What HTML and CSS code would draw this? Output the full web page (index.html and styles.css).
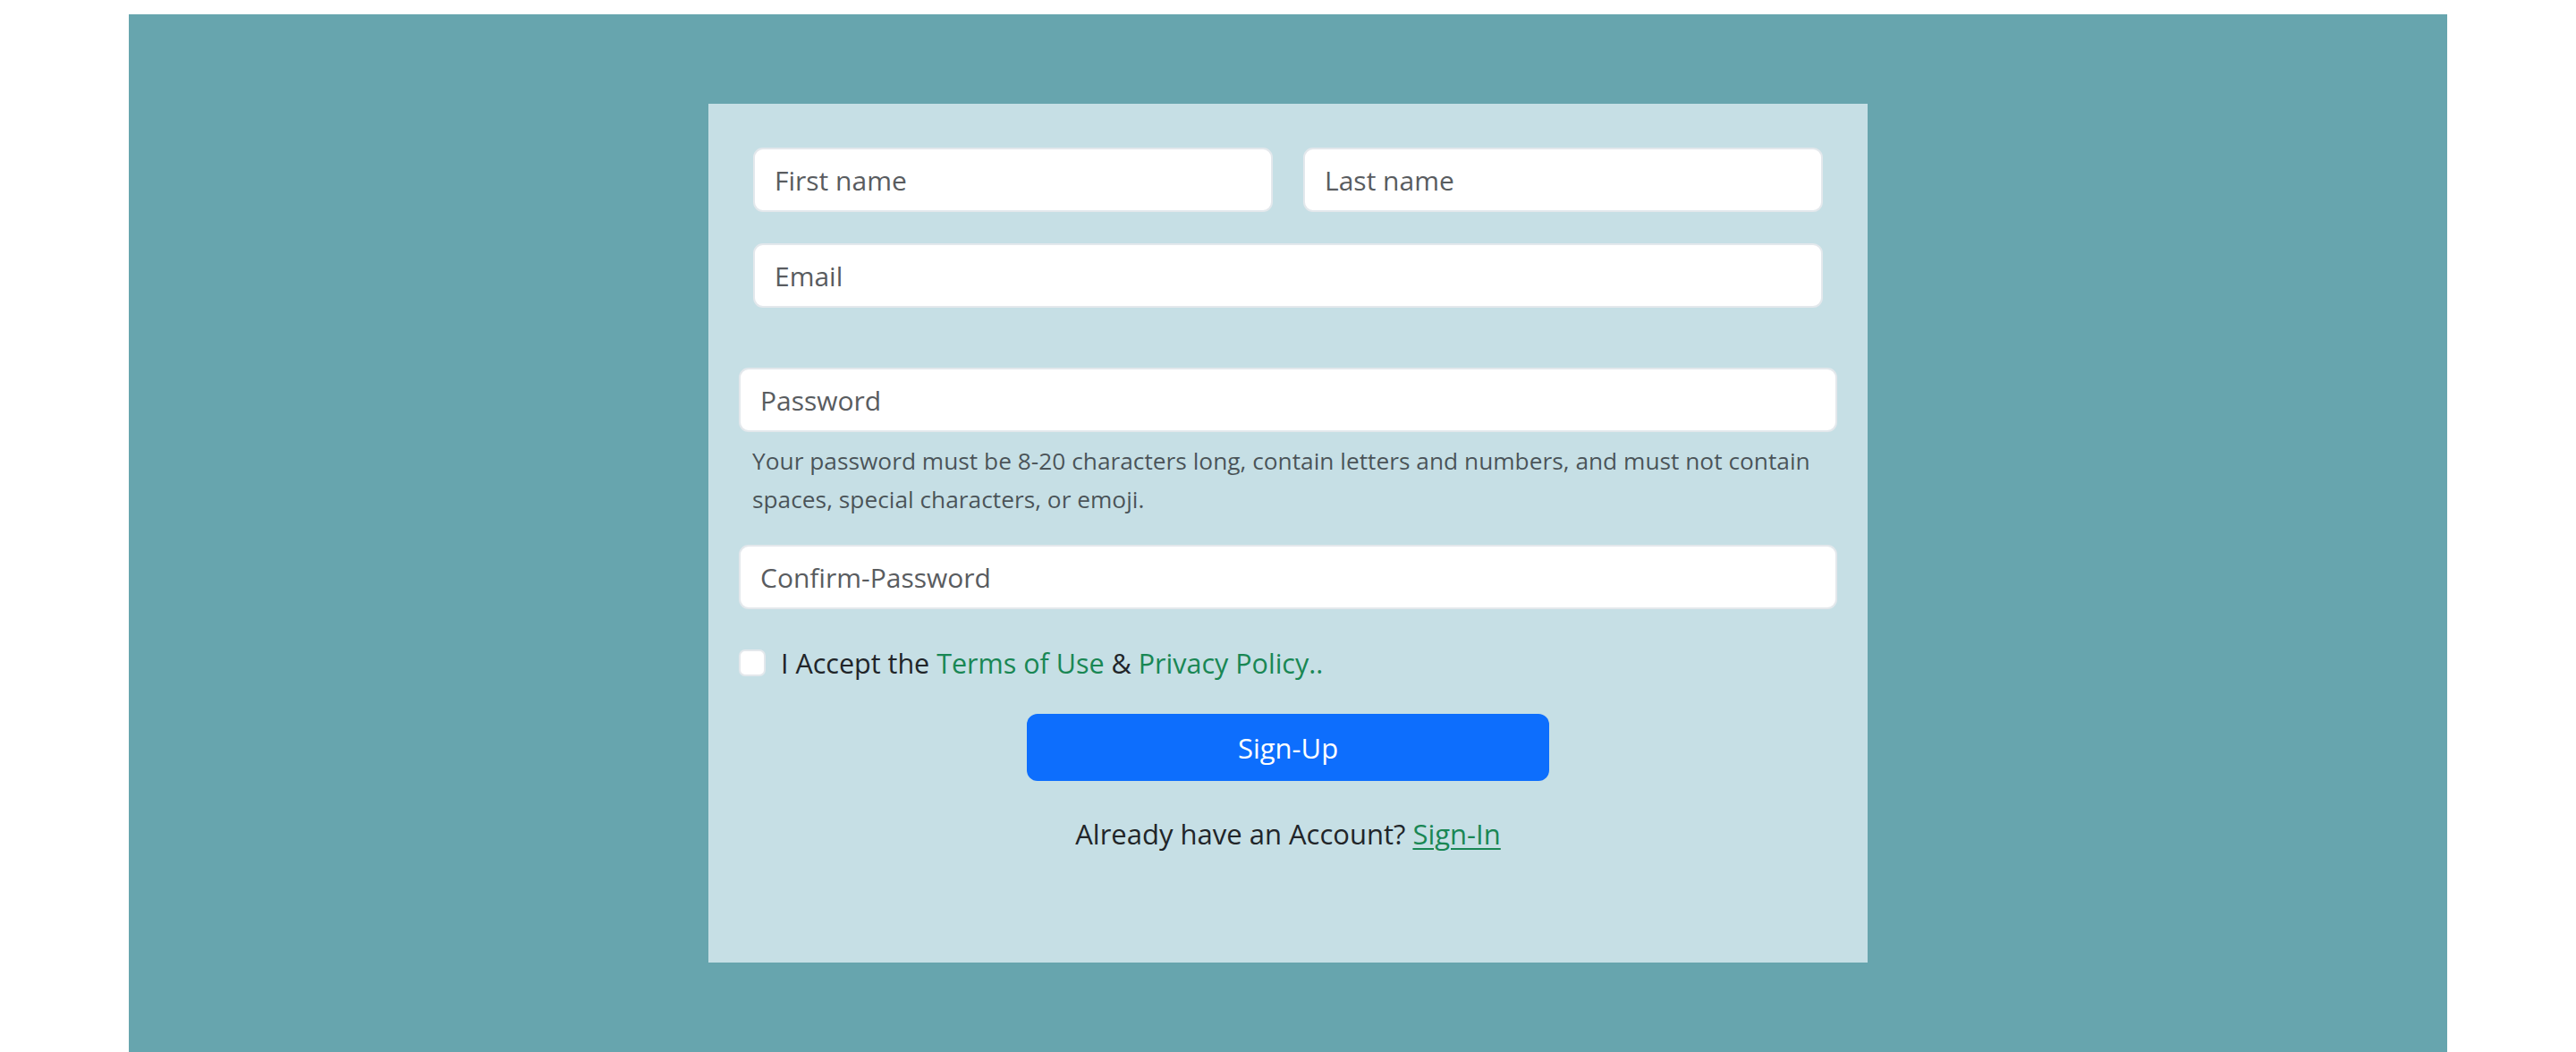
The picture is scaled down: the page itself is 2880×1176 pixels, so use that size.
FILE: index.html
```html
<!DOCTYPE html>
<html lang="en">
<head>
<meta charset="utf-8">
<title>Sign Up</title>
<link rel="stylesheet" href="styles.css">
</head>
<body>
<div class="page">
  <div class="outer">
    <form class="card">
      <div class="name-row">
        <input class="field" type="text" placeholder="First name">
        <input class="field" type="text" placeholder="Last name">
      </div>
      <div class="email-row">
        <input class="field" type="email" placeholder="Email">
      </div>
      <input class="field password" type="password" placeholder="Password">
      <div class="help">Your password must be 8-20 characters long, contain letters and numbers, and must not contain spaces, special characters, or emoji.</div>
      <input class="field confirm" type="password" placeholder="Confirm-Password">
      <label class="accept">
        <span class="box"></span>
        <span>I Accept the <a class="link" href="#">Terms of Use</a> &amp; <a class="link" href="#">Privacy Policy..</a></span>
      </label>
      <div class="actions">
        <button type="button" class="btn">Sign-Up</button>
      </div>
      <p class="already">Already have an Account? <a class="link underline" href="#">Sign-In</a></p>
    </form>
  </div>
</div>
</body>
</html>
```
FILE: styles.css
```css
html, body {
  margin: 0;
  padding: 0;
  background: #ffffff;
}
body {
  font-family: "Open Sans", "Noto Sans", sans-serif;
  color: #212529;
}
.page {
  padding-top: 16px;
}
.outer {
  margin: 0 144px;
  background: #67a5ae;
  padding: 100px 0 100px;
}
.card {
  width: 1296px;
  height: 960px;
  box-sizing: border-box;
  margin: 0 auto;
  background: #c6dfe5;
  padding: 49px 34px 0;
  display: flex;
  flex-direction: column;
}
.field {
  display: block;
  width: 100%;
  box-sizing: border-box;
  height: 72px;
  border: 2px solid #e3e8ec;
  border-radius: 11px;
  background: #ffffff;
  padding: 0 22px;
  font-family: inherit;
  font-size: 30px;
  color: #212529;
  outline: none;
}
.field::placeholder {
  color: #595c5f;
}
.name-row {
  display: flex;
  gap: 34px;
  padding: 0 16px;
}
.email-row {
  padding: 0 16px;
  margin-top: 35px;
}
.password {
  margin-top: 67px;
}
.help {
  padding: 0 15px;
  margin-top: 11px;
  font-size: 26.3px;
  line-height: 43px;
  color: rgba(33, 37, 41, 0.75);
}
.confirm {
  margin-top: 29px;
}
.accept {
  display: flex;
  align-items: center;
  gap: 17px;
  margin-top: 42px;
  font-size: 30.5px;
  line-height: 36px;
}
.box {
  width: 30px;
  height: 30px;
  box-sizing: border-box;
  background: #ffffff;
  border: 2px solid #e3e8ec;
  border-radius: 7px;
  flex: none;
}
.link {
  color: #198754;
  text-decoration: none;
}
.underline {
  text-decoration: underline;
  text-underline-offset: 4px;
  text-decoration-thickness: 2px;
}
.actions {
  display: flex;
  justify-content: center;
  margin-top: 39px;
}
.btn {
  width: 584px;
  height: 75px;
  border: none;
  border-radius: 12px;
  background: #0d6efd;
  color: #ffffff;
  font-family: inherit;
  font-size: 31px;
}
.already {
  margin: 37px 0 0;
  text-align: center;
  font-size: 31px;
  line-height: 45px;
}
```
